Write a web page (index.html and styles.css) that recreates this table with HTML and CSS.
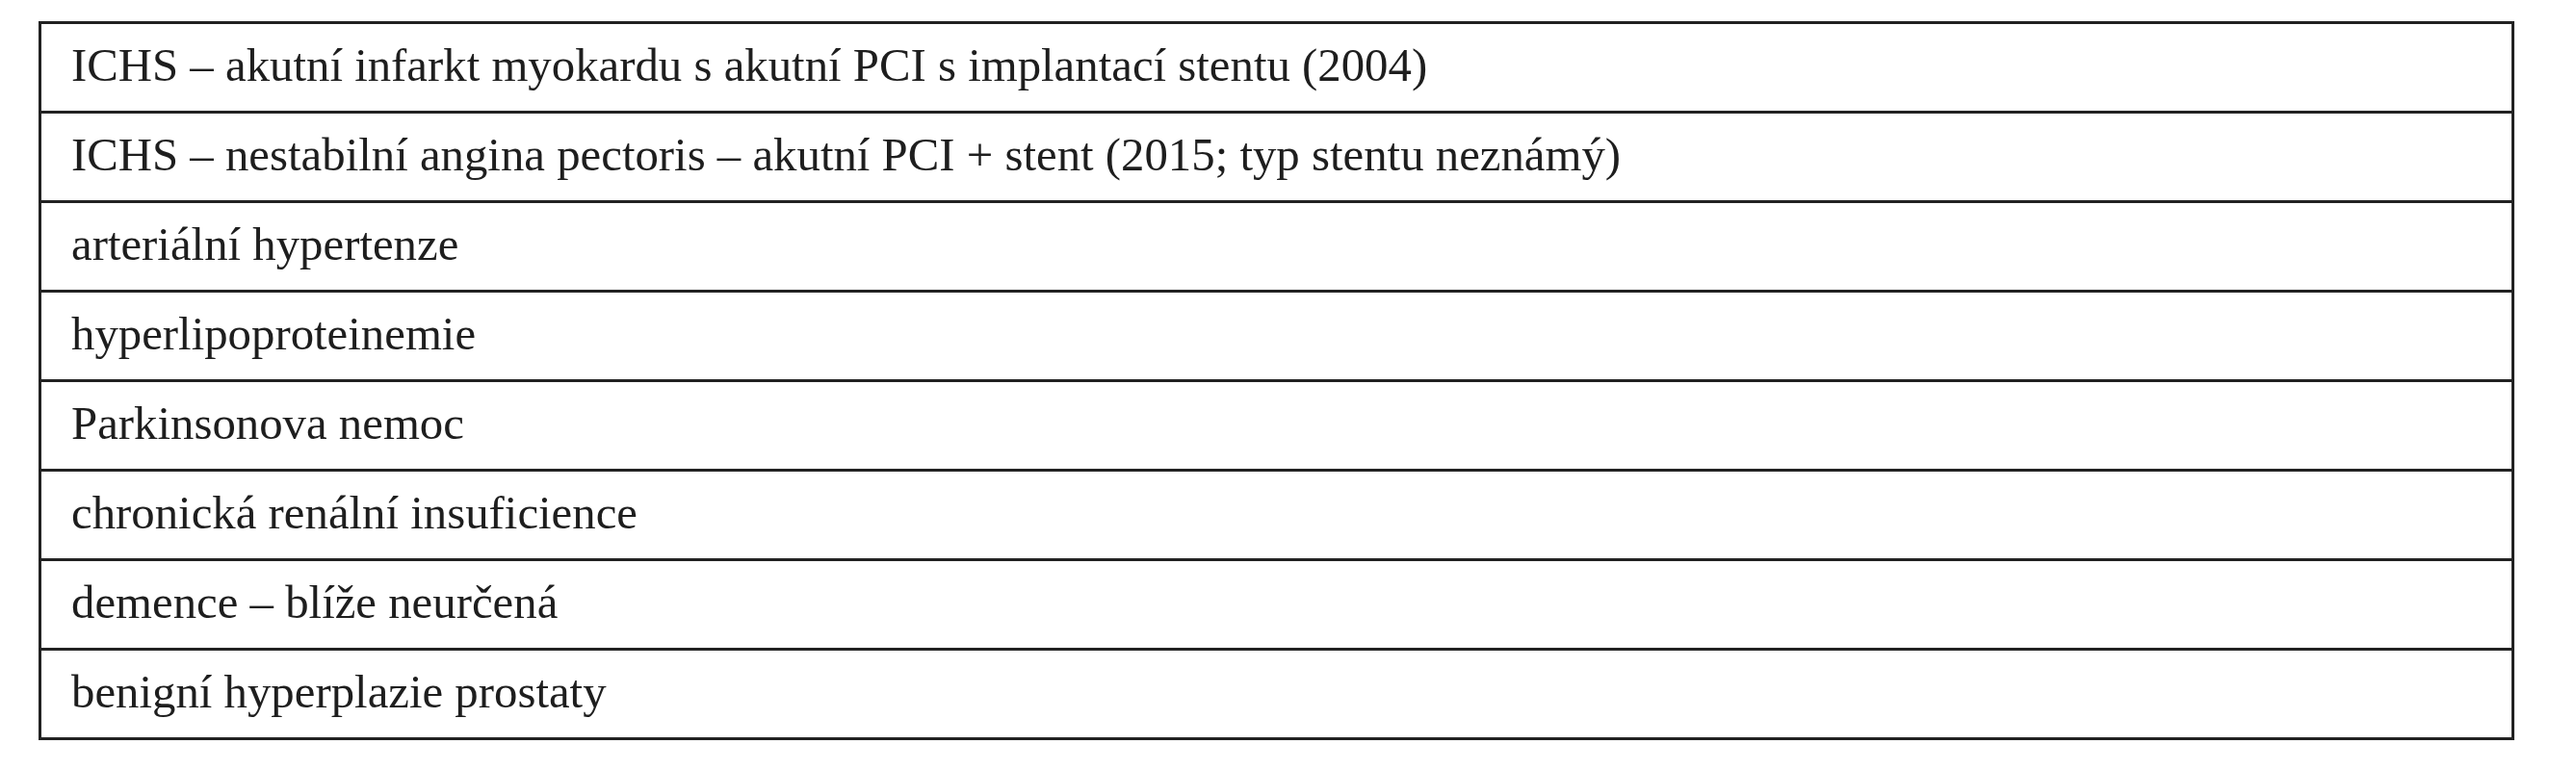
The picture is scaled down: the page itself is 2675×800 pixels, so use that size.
FILE: index.html
```html
<!DOCTYPE html>
<html lang="cs">
<head>
<meta charset="utf-8">
<title>Diagnózy</title>
<link rel="stylesheet" href="styles.css">
</head>
<body>
<table class="dx">
  <tbody>
    <tr><td>ICHS – akutní infarkt myokardu s akutní PCI s implantací stentu (2004)</td></tr>
    <tr><td>ICHS – nestabilní angina pectoris – akutní PCI + stent (2015; typ stentu neznámý)</td></tr>
    <tr><td>arteriální hypertenze</td></tr>
    <tr><td>hyperlipoproteinemie</td></tr>
    <tr><td>Parkinsonova nemoc</td></tr>
    <tr><td>chronická renální insuficience</td></tr>
    <tr><td>demence – blíže neurčená</td></tr>
    <tr><td>benigní hyperplazie prostaty</td></tr>
  </tbody>
</table>
</body>
</html>
```

FILE: styles.css
```css
html, body {
  margin: 0;
  background: #ffffff;
}

body {
  padding: 22px 0 0 40px;
  font-family: "Liberation Serif", "Times New Roman", serif;
  color: #1e1e1e;
}

.dx {
  width: 2571px;
  border-collapse: separate;
  border-spacing: 0;
  border: 3px solid #222222;
}

.dx td {
  padding: 0 30px 4px 31px;
  font-size: 48.8px;
  line-height: 86px;
  white-space: nowrap;
  border-top: 3px solid #222222;
}

.dx tr:first-child td {
  border-top: none;
}
```
